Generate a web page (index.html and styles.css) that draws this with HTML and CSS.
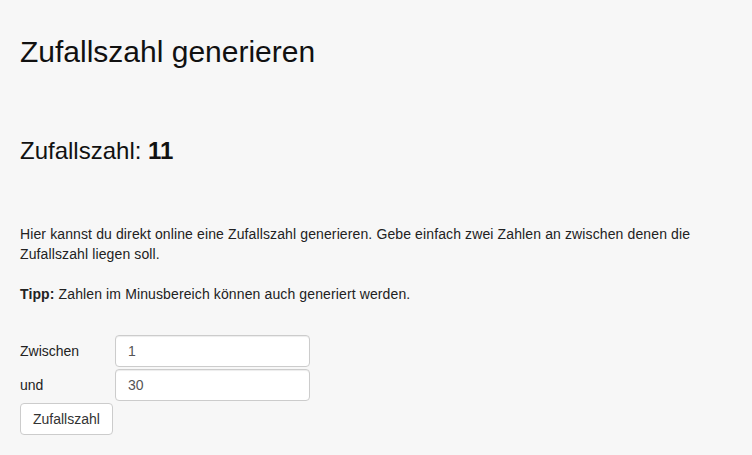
FILE: index.html
```html
<!DOCTYPE html>
<html>
<head>
    <title>Zufallszahl generieren</title>
    <link rel="stylesheet" href="styles.css">
</head>
<body>
    <div class="page">
        <h1>Zufallszahl generieren</h1>
        <h2 class="result">Zufallszahl: <strong id="result">11</strong></h2>
        <p class="intro">Hier kannst du direkt online eine Zufallszahl generieren. Gebe einfach zwei Zahlen an zwischen denen die Zufallszahl liegen soll.</p>
        <p class="tip"><strong>Tipp:</strong> Zahlen im Minusbereich können auch generiert werden.</p>

        <form class="range-form" onsubmit="generate(); return false;">
            <label for="min">Zwischen</label>
            <input type="text" id="min" class="field" value="1">
            <label for="max">und</label>
            <input type="text" id="max" class="field" value="30">
            <button type="submit" class="btn">Zufallszahl</button>
        </form>
    </div>

    <script>
        function generate() {
            let min = parseInt(document.getElementById('min').value, 10);
            let max = parseInt(document.getElementById('max').value, 10);
            if (isNaN(min) || isNaN(max)) return;
            if (min > max) {
                const t = min; min = max; max = t;
            }
            const n = Math.floor(Math.random() * (max - min + 1)) + min;
            document.getElementById('result').textContent = n;
        }
    </script>
</body>
</html>
```

FILE: styles.css
```css
html, body {
    margin: 0;
    background: #f7f7f7;
}

body {
    font-family: "Liberation Sans", Arial, sans-serif;
    font-size: 14px;
    line-height: 20px;
    color: #222;
}

.page {
    padding: 1px 20px 20px 20px;
}

h1 {
    font-size: 30px;
    font-weight: normal;
    line-height: 33px;
    color: #111;
    margin: 34px 0 0 0;
}

.result {
    font-size: 24px;
    font-weight: normal;
    line-height: 26px;
    color: #111;
    margin: 70px 0 0 0;
}

.intro,
.tip {
    letter-spacing: 0.12px;
}

.intro {
    margin: 60px 0 0 0;
}

.tip {
    margin: 20px 0 0 0;
}

.range-form {
    display: grid;
    grid-template-columns: 95px 195px;
    row-gap: 2px;
    align-items: center;
    margin-top: 31px;
}

.field {
    box-sizing: border-box;
    height: 32px;
    padding: 6px 12px;
    font-family: inherit;
    font-size: 14px;
    color: #555;
    background: #fff;
    border: 1px solid #ccc;
    border-radius: 4px;
    box-shadow: inset 0 1px 1px rgba(0, 0, 0, 0.075);
}

.btn {
    grid-column: 1;
    justify-self: start;
    box-sizing: border-box;
    height: 32px;
    padding: 6px 12px;
    font-family: inherit;
    font-size: 14px;
    color: #333;
    background: #fff;
    border: 1px solid #ccc;
    border-radius: 4px;
    cursor: pointer;
}

.btn:hover {
    background: #e6e6e6;
}
```
